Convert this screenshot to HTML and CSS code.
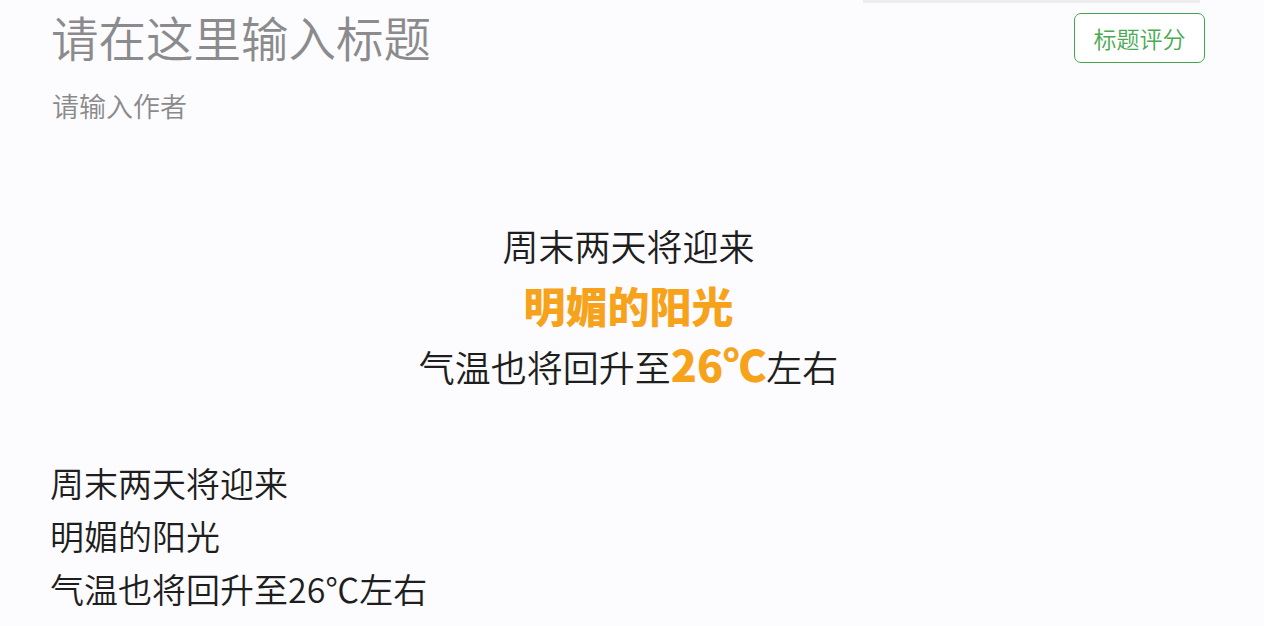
FILE: index.html
```html
<!DOCTYPE html>
<html lang="zh-CN">
<head>
<meta charset="utf-8">
<title>编辑</title>
<link rel="stylesheet" href="styles.css">
</head>
<body>
<div class="topstrip"></div>
<div class="page">
  <header class="header">
    <div class="heading">
      <h1 class="title">请在这里输入标题</h1>
      <div class="author">请输入作者</div>
    </div>
    <button class="score-btn">标题评分</button>
  </header>
  <section class="poster">
    <p class="pline">周末两天将迎来</p>
    <p class="pline hl">明媚的阳光</p>
    <p class="pline">气温也将回升至<span class="hl-num">26℃</span>左右</p>
  </section>
  <section class="plain">
    <p class="tline">周末两天将迎来</p>
    <p class="tline">明媚的阳光</p>
    <p class="tline">气温也将回升至26℃左右</p>
  </section>
</div>
</body>
</html>
```
FILE: styles.css
```css
html, body {
  margin: 0;
  padding: 0;
  background: #fcfbfd;
  font-family: "Noto Sans CJK SC", "Noto Sans", sans-serif;
  overflow: hidden;
  height: 626px;
}
.topstrip {
  height: 3px;
  margin-left: 863px;
  width: 337px;
  background: #ededee;
}
.page {
  padding: 0 59px 0 52px;
}
.header {
  display: flex;
  justify-content: space-between;
  align-items: flex-start;
}
.title {
  margin: 6px 0 0 -1px;
  font-size: 47.5px;
  line-height: 56px;
  font-weight: 350;
  color: #8b8b8d;
}
.author {
  margin-top: 25px;
  font-size: 27px;
  line-height: 32px;
  font-weight: 350;
  color: #8a8a8a;
}
.score-btn {
  margin-top: 10px;
  width: 131px;
  height: 50px;
  border: 1.5px solid #43a64d;
  border-radius: 7px;
  background: #ffffff;
  color: #4aaa52;
  font-family: "Noto Sans CJK SC", sans-serif;
  font-size: 23px;
  font-weight: 350;
  padding: 0;
  line-height: 46px;
}
.poster {
  margin-top: 94px;
  text-align: center;
}
.pline {
  margin: 0;
  font-size: 36px;
  line-height: 59px;
  font-weight: 350;
  color: #1e1e1e;
}
.pline.hl {
  color: #f7a21b;
  font-weight: 900;
  font-size: 42px;
}
.hl-num {
  color: #f7a21b;
  font-weight: 900;
  font-size: 43px;
}
.plain {
  margin-top: 60px;
  margin-left: -2px;
}
.tline {
  margin: 0;
  font-size: 34px;
  line-height: 53px;
  font-weight: 350;
  color: #1e1e1e;
}
```
